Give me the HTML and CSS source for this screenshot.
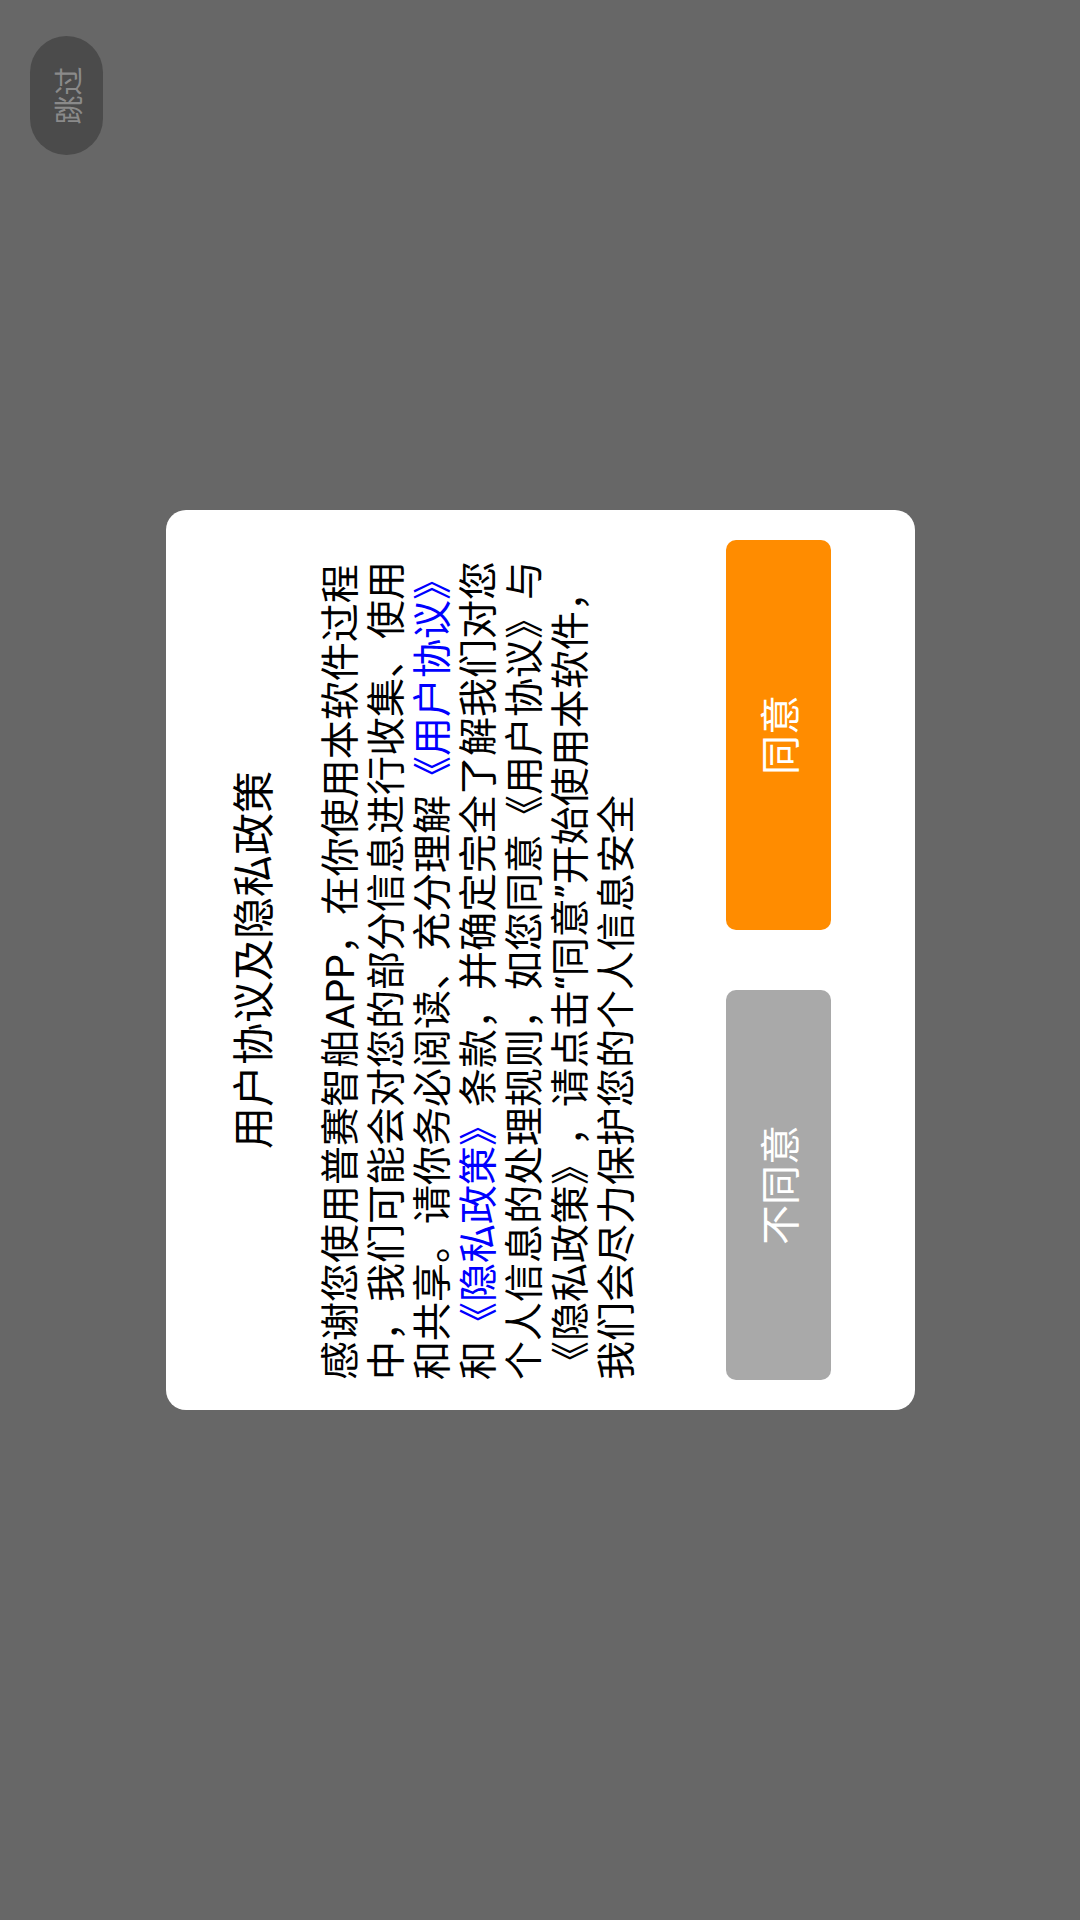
FILE: index.html
```html
<!DOCTYPE html>
<html lang="zh-CN">
<head>
<meta charset="utf-8">
<title>用户协议及隐私政策</title>
<link rel="stylesheet" href="styles.css">
</head>
<body>
<div class="viewport">
  <div class="stage">
    <button class="skip">跳过</button>
    <div class="dialog">
      <h1 class="title">用户协议及隐私政策</h1>
      <p class="content">感谢您使用普赛智舶APP，在你使用本软件过程中，我们可能会对您的部分信息进行收集、使用和共享。请你务必阅读、充分理解<a class="link">《用户协议》</a>和<a class="link">《隐私政策》</a>条款，并确定完全了解我们对您个人信息的处理规则，如您同意《用户协议》与《隐私政策》，请点击“同意”开始使用本软件，我们会尽力保护您的个人信息安全</p>
      <div class="actions">
        <button class="btn btn-decline">不同意</button>
        <button class="btn btn-agree">同意</button>
      </div>
    </div>
  </div>
</div>
</body>
</html>
```
FILE: styles.css
```css
html, body {
  margin: 0;
  padding: 0;
  width: 1080px;
  height: 1920px;
  overflow: hidden;
  background: #676767;
}

.viewport {
  width: 1080px;
  height: 1920px;
  overflow: hidden;
}

.stage {
  width: 1920px;
  height: 1080px;
  position: relative;
  display: flex;
  align-items: center;
  justify-content: center;
  background: #676767;
  transform-origin: top left;
  transform: translateY(1920px) rotate(-90deg);
  font-family: Roboto, "Noto Sans CJK SC", sans-serif;
  text-spacing-trim: space-all;
}

.skip {
  position: absolute;
  top: 30px;
  right: 36px;
  width: 119px;
  height: 73px;
  border: none;
  border-radius: 37px;
  background: #4b4b4b;
  color: #8a8a8a;
  font-family: Roboto, "Noto Sans CJK SC", sans-serif;
  font-size: 29px;
  padding: 0;
}

.dialog {
  width: 900px;
  height: 749px;
  box-sizing: border-box;
  padding: 64px 30px 84px;
  background: #ffffff;
  border-radius: 20px;
  display: flex;
  flex-direction: column;
}

.title {
  margin: 0;
  font-size: 42px;
  font-weight: normal;
  line-height: 50px;
  text-align: center;
  color: #000;
}

.content {
  margin: 38px 10px 0 0;
  font-size: 39px;
  line-height: 46px;
  color: #000;
  text-spacing-trim: space-all;
}

.link {
  color: #0000ff;
  text-decoration: none;
}

.actions {
  margin-top: auto;
  display: flex;
  justify-content: space-between;
}

.btn {
  width: 390px;
  height: 105px;
  border: none;
  border-radius: 10px;
  color: #ffffff;
  font-family: Roboto, "Noto Sans CJK SC", sans-serif;
  font-size: 40px;
  padding: 0;
}

.btn-decline {
  background: #a9a9a9;
}

.btn-agree {
  background: #ff8c00;
}
```
